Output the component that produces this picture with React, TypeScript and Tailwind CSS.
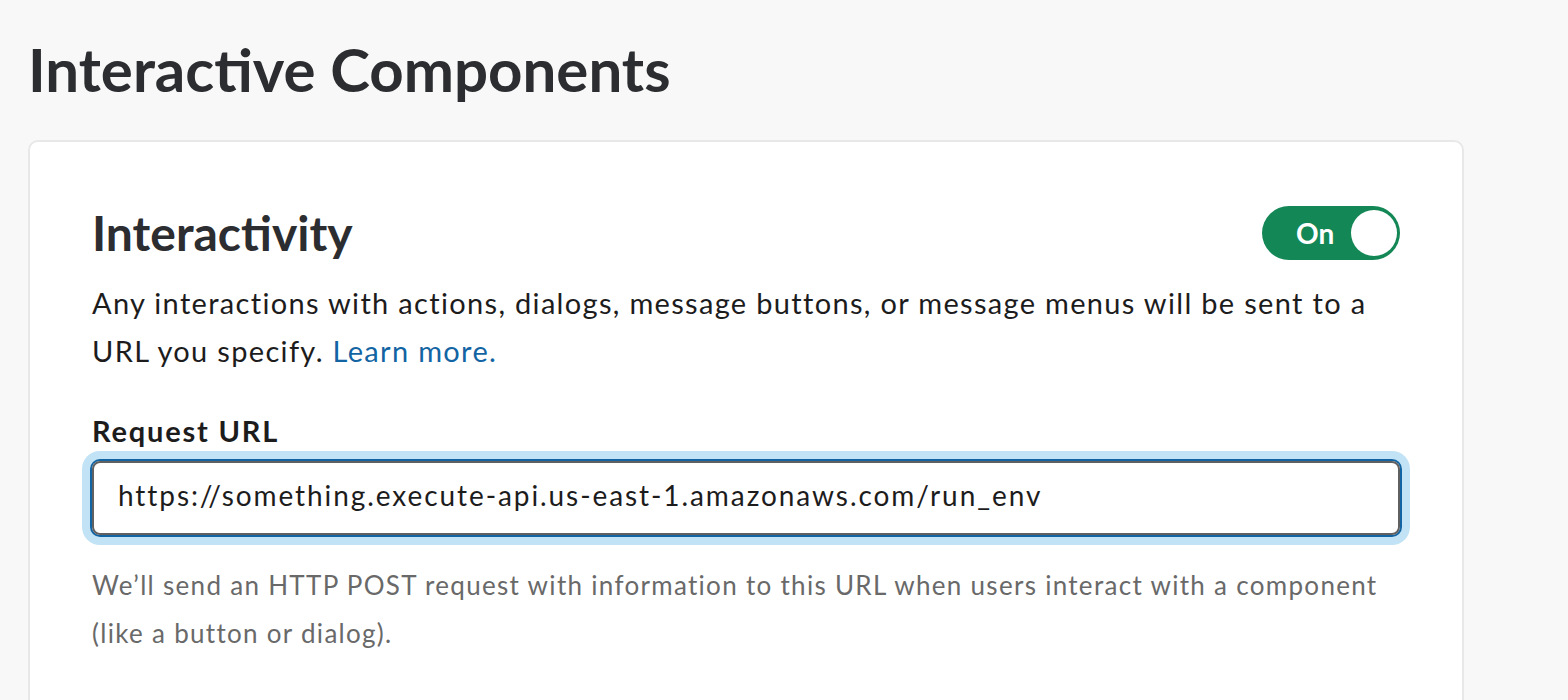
export default function App() {
  return (
    <div
      className="h-[700px] overflow-hidden bg-[#f8f8f8] pl-[28px] pr-[104px] text-[#1d1c1d]"
      style={{ fontFamily: "Lato, 'Open Sans', sans-serif" }}
    >
      <h1 className="pt-[33px] text-[60px] font-bold leading-[72px] text-[#2c2d30]">
        Interactive Components
      </h1>
      <div className="mt-[35px] rounded-[10px] border-2 border-[#e8e8e8] bg-white px-[62px] pt-[62px] pb-[60px]">
        <div className="flex h-[58px] items-center justify-between">
          <h2 className="text-[48px] font-bold leading-[58px] text-[#2c2d30]">Interactivity</h2>
          <div className="flex h-[54px] w-[138px] items-center rounded-full bg-[#148756] pl-[34px] pr-[3px]">
            <span className="text-[28px] font-bold leading-none text-white">On</span>
            <span className="ml-auto h-[46px] w-[46px] rounded-full bg-white" />
          </div>
        </div>
        <p className="mt-[17px] text-[29px] leading-[48px] tracking-[1.32px] text-[#1d1c1d]">
          Any interactions with actions, dialogs, message buttons, or message menus will be sent to a URL you
          specify. <span className="text-[#1264a3]">Learn more.</span>
        </p>
        <div className="mt-[36px] text-[29px] font-bold leading-[40px] tracking-[1.8px] text-[#1d1c1d]">
          Request URL
        </div>
        <div className="mt-[10px] flex h-[74px] items-center rounded-[8px] border-2 border-[#616061] pl-[24px] pb-[6px] text-[28px] leading-[34px] tracking-[1.92px] text-[#1d1c1d] shadow-[0_0_0_2px_#1264a3,0_0_0_10px_#c2e3f5]">
          https://something.execute-api.us-east-1.amazonaws.com/run_env
        </div>
        <p className="mt-[26px] text-[26px] leading-[48px] tracking-[1.3px] text-[#696969]">
          We’ll send an HTTP POST request with information to this URL when users interact with a component
          (like a button or dialog).
        </p>
      </div>
    </div>
  );
}
